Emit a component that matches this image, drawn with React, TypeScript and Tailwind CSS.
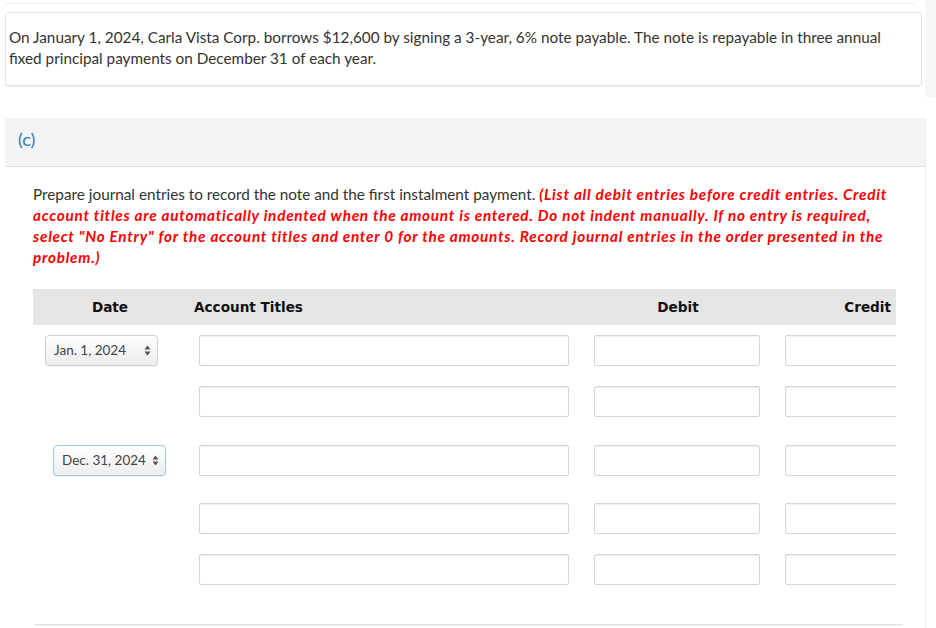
import React from "react";

const Arrows = () => (
  <svg width="7" height="11" viewBox="0 0 7 11" className="shrink-0">
    <path d="M3.5 0.5 L6.5 4.5 L0.5 4.5 Z" fill="#555" />
    <path d="M3.5 10.5 L6.5 6.5 L0.5 6.5 Z" fill="#555" />
  </svg>
);

const Box = ({ w }: { w: string }) => (
  <div
    className={`${w} h-[31px] shrink-0 rounded-[2px] border border-[#d6d6d6] bg-white shadow-[inset_0_1px_1px_rgba(0,0,0,0.07)]`}
  />
);

const Row = ({ date, focused, ml, mt }: { date?: string; focused?: boolean; ml?: string; mt: string }) => (
  <div className={`flex items-center ${mt}`}>
    <div className="w-[166px] shrink-0 flex">
      {date ? (
        <div
          className={`${ml} h-[31px] w-[113px] flex items-center justify-between pl-[8px] pr-[6px] rounded-[4px] border ${
            focused ? "border-[#9cc6ea]" : "border-[#d0d0d0]"
          } bg-gradient-to-b from-white to-[#ececec] text-[13.5px] text-[#444] shadow-[0_1px_1px_rgba(0,0,0,0.06)]`}
        >
          <span>{date}</span>
          <Arrows />
        </div>
      ) : null}
    </div>
    <Box w="w-[370px]" />
    <div className="w-[25px] shrink-0" />
    <Box w="w-[166px]" />
    <div className="w-[25px] shrink-0" />
    <Box w="w-[166px]" />
  </div>
);

export default function App() {
  return (
    <div className="w-[936px] h-[628px] overflow-hidden bg-white font-['Lato','Liberation_Sans',sans-serif] text-[#333]">
      <div className="flex">
        <div className="w-[925px] shrink-0">
          <div className="h-[4px] ml-[5px] mr-[10px] border-b border-[#efefef]" />
          <div className="mt-[8px] ml-[5px] mr-[3px] h-[74px] rounded-[3px] border border-[#e3e3e3] shadow-[0_1px_1px_rgba(0,0,0,0.06)] pl-[3px] pr-[24px] pt-[14px] text-[15.3px] leading-[21px]">
            On January 1, 2024, Carla Vista Corp. borrows $12,600 by signing a 3-year, 6% note payable. The note is repayable in three annual fixed principal payments on December 31 of each year.
          </div>
        </div>
        <div className="w-[11px] h-[97px] bg-[#f7f7f7]" />
      </div>

      <div className="mt-[21px] ml-[5px] w-[921px] border-r border-[#ececec] h-[520px]">
        <div className="h-[49px] bg-[#f4f4f4] border-b border-[#e0e0e0] pl-[13px] pt-[8px] text-[18px] text-[#2b7db5]">
          (c)
        </div>
        <div className="pl-[28px] pt-[17px] w-[890px] text-[15.3px] leading-[21px]">
          Prepare journal entries to record the note and the first instalment payment.{" "}
          <span className="font-bold italic text-[#ff0000] tracking-[0.74px]">
            (List all debit entries before credit entries. Credit account titles are automatically indented when the amount is entered. Do not indent manually. If no entry is required, select "No Entry" for the account titles and enter 0 for the amounts. Record journal entries in the order presented in the problem.)
          </span>
        </div>

        <div className="ml-[28px] mt-[21px] w-[863px] overflow-hidden">
          <div className="h-[36px] bg-[#e5e5e5] flex items-center font-['DejaVu_Sans',sans-serif] font-bold text-[13.6px] text-[#111]">
            <div className="w-[154px] text-center">Date</div>
            <div className="w-[408px] pl-[7px]">Account Titles</div>
            <div className="w-[166px] text-center">Debit</div>
            <div className="flex-1 text-right pr-[5px]">Credit</div>
          </div>
          <Row date="Jan. 1, 2024" ml="ml-[12px]" mt="mt-[10px]" />
          <Row mt="mt-[20px]" />
          <Row date="Dec. 31, 2024" focused ml="ml-[20px]" mt="mt-[28px]" />
          <Row mt="mt-[27px]" />
          <Row mt="mt-[20px]" />
        </div>
        <div className="ml-[30px] mr-[22px] mt-[39px] border-t border-[#e2e2e2] shadow-[0_1px_1px_rgba(0,0,0,0.05)]" />
      </div>
    </div>
  );
}
